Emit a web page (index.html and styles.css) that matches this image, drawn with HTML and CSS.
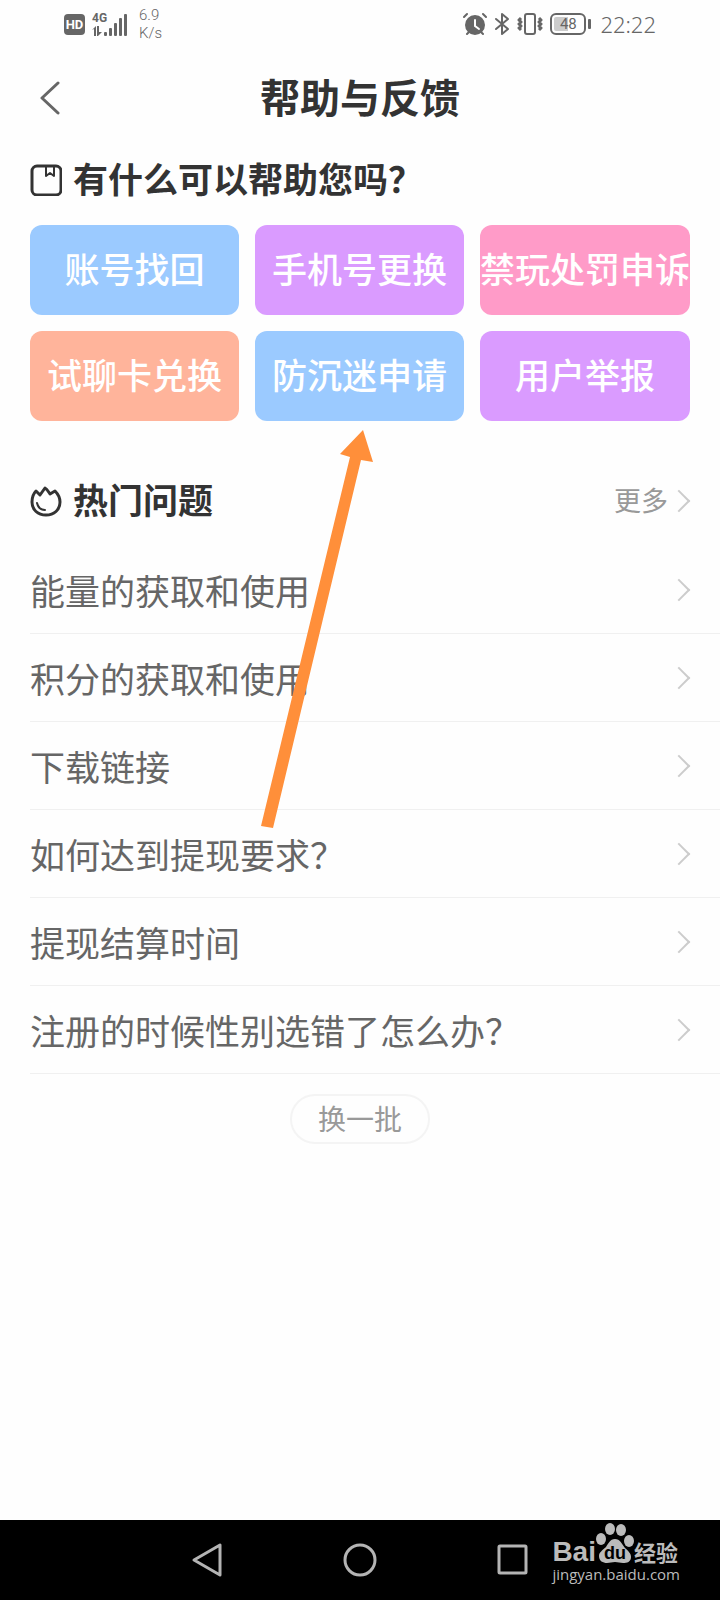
FILE: index.html
```html
<!DOCTYPE html>
<html lang="zh-CN">
<head>
<meta charset="UTF-8" />
<meta name="viewport" content="width=device-width, initial-scale=1" />
<title>帮助与反馈</title>
<link rel="stylesheet" href="styles.css">
</head>
<body>

<div class="status-bar">
  <div class="status-left">
    <span class="hd">HD</span>
    <span class="signal">
      <span class="net">4G</span>
      <svg width="36" height="24" viewBox="0 0 36 24" fill="#666">
        <path d="M0 18l4-4v10H2v-7zM5 14h2v6h3l-4 4H5z"/>
        <rect x="12" y="20" width="3" height="4" rx="1"/>
        <rect x="17" y="16" width="3" height="8" rx="1"/>
        <rect x="22" y="11" width="3" height="13" rx="1"/>
        <rect x="27" y="6" width="3" height="18" rx="1"/>
        <rect x="32" y="2" width="3" height="22" rx="1"/>
      </svg>
    </span>
    <span class="speed">6.9<br>K/s</span>
  </div>
  <div class="status-right">
    <svg width="24" height="24" viewBox="0 0 24 24" fill="none" stroke="#666" stroke-width="2" stroke-linecap="round">
      <circle cx="12" cy="13" r="9" fill="#666"/>
      <path d="M1 5l3-3M23 5l-3-3M6 20l-2 2M18 20l2 2"/>
      <path d="M12 8v6l4 3" stroke="#fff"/>
    </svg>
    <svg width="16" height="24" viewBox="0 0 16 24" fill="none" stroke="#666" stroke-width="2" stroke-linejoin="round" stroke-linecap="round">
      <path d="M2 7l12 10-6 5V2l6 5L2 17"/>
    </svg>
    <svg width="26" height="24" viewBox="0 0 26 24" fill="none" stroke="#666" stroke-width="2" stroke-linejoin="round">
      <rect x="8" y="2" width="10" height="20" rx="2"/>
      <path d="M4 6L2 8l2 2-2 2 2 2-2 2 2 2M22 6l2 2-2 2 2 2-2 2 2 2-2 2" stroke-width="3"/>
    </svg>
    <span class="battery"><span class="battery-body">48</span></span>
    <span class="clock">22:22</span>
  </div>
</div>

<header class="header">
  <button class="back" aria-label="返回">
    <svg width="20" height="34" viewBox="0 0 20 34" fill="none" stroke="#666" stroke-width="3" stroke-linecap="round" stroke-linejoin="round"><path d="M18 2L2 17l16 15"/></svg>
  </button>
  <h1>帮助与反馈</h1>
</header>

<main>
  <section class="help">
    <h2>
      <svg class="heading-icon" viewBox="0 0 32 32" fill="none" stroke="#333" stroke-width="3" stroke-linejoin="round">
        <rect x="2" y="2" width="29" height="29" rx="5"/>
        <path d="M16 2v10l4-3 4 3V2" stroke-width="2"/>
      </svg>
      有什么可以帮助您吗？
    </h2>
    <div class="tiles">
      <button class="tile blue">账号找回</button>
      <button class="tile purple">手机号更换</button>
      <button class="tile pink">禁玩处罚申诉</button>
      <button class="tile orange">试聊卡兑换</button>
      <button class="tile blue">防沉迷申请</button>
      <button class="tile purple">用户举报</button>
      <svg class="arrow" width="114" height="400" viewBox="0 0 114 400">
        <path d="M102 1L79 25l10 3L0 397l12 2L100 31l12 2z" fill="#ff8f3a"/>
      </svg>
    </div>
  </section>

  <section class="hot">
    <div class="hot-head">
      <h2>
        <svg class="heading-icon" viewBox="0 0 32 32" fill="none" stroke="#333" stroke-width="3" stroke-linejoin="round" stroke-linecap="round">
          <path d="M6 6l4 4 5-7c2 1 3 3 5 6l5-3c3 3 5 7 5 11 0 8-6 13-14 13S2 25 2 17c0-4 1-8 4-11z"/>
          <path d="M7 18c1 4 4 7 8 7" stroke-width="2"/>
        </svg>
        热门问题
      </h2>
      <a href="#" class="more">更多 <i class="chevron"></i></a>
    </div>
    <ul class="questions">
      <li><a href="#">能量的获取和使用 <i class="chevron"></i></a></li>
      <li><a href="#">积分的获取和使用 <i class="chevron"></i></a></li>
      <li><a href="#">下载链接 <i class="chevron"></i></a></li>
      <li><a href="#">如何达到提现要求？ <i class="chevron"></i></a></li>
      <li><a href="#">提现结算时间 <i class="chevron"></i></a></li>
      <li><a href="#">注册的时候性别选错了怎么办？ <i class="chevron"></i></a></li>
    </ul>
  </section>
  <button class="refresh">换一批</button>
</main>

<nav class="nav-bar">
  <button aria-label="返回">
    <svg width="36" height="36" viewBox="0 0 36 36" fill="none" stroke="#b4b4b4" stroke-width="3" stroke-linejoin="round"><path d="M31 3v30L5 18z"/></svg>
  </button>
  <button aria-label="主页">
    <svg width="36" height="36" viewBox="0 0 36 36" fill="none" stroke="#b4b4b4" stroke-width="3"><circle cx="18" cy="18" r="15"/></svg>
  </button>
  <button aria-label="最近任务">
    <svg width="36" height="36" viewBox="0 0 36 36" fill="none" stroke="#b4b4b4" stroke-width="3" stroke-linejoin="round"><rect x="4" y="4" width="27" height="27" rx="1"/></svg>
  </button>
  <div class="watermark">
    <div class="brand">
      <span class="bai">Bai</span>
      <svg width="38" height="42" viewBox="0 0 38 42" fill="#bbb">
        <ellipse cx="5" cy="17" rx="5" ry="6"/>
        <ellipse cx="14" cy="7" rx="5" ry="6"/>
        <ellipse cx="25" cy="8" rx="5" ry="6"/>
        <ellipse cx="33" cy="19" rx="5" ry="6"/>
        <path d="M19 17c5 0 7 5 10 9 3 3 6 5 6 9 0 5-4 6-8 6-3 0-5-1-8-1s-5 1-8 1c-4 0-8-2-8-7 0-4 4-6 7-9 2-3 4-8 9-8z"/>
        <text x="19" y="37" class="du">du</text>
      </svg>
      <span class="jingyan">经验</span>
    </div>
    <div class="site">jingyan.baidu.com</div>
  </div>
</nav>

</body>
</html>
```

FILE: styles.css
```css
* {
  box-sizing: border-box;
}
body {
  margin: 0;
  min-height: 100vh;
  display: flex;
  flex-direction: column;
  font-family: "Noto Sans", "Noto Sans CJK SC", sans-serif;
  font-size: 35px;
  color: #666;
  background: #fefefe;
}
h1, h2, ul {
  margin: 0;
  padding: 0;
}
a {
  color: inherit;
  text-decoration: none;
}
button {
  border: none;
  padding: 0;
  background: none;
  font-family: inherit;
  font-size: inherit;
  cursor: pointer;
}
svg {
  display: block;
  flex: none;
}

/* status bar */
.status-bar {
  display: flex;
  justify-content: space-between;
  align-items: center;
  height: 48px;
  padding: 0 64px;
}
.status-left, .status-right {
  display: flex;
  align-items: center;
  gap: 7px;
}
.hd {
  width: 21px;
  height: 21px;
  border-radius: 4px;
  background: #666;
  color: #fff;
  font: bold 13px/21px Roboto, sans-serif;
  text-align: center;
}
.signal {
  position: relative;
}
.net {
  position: absolute;
  left: 0;
  top: 0;
  font: bold 12px/12px Roboto, sans-serif;
}
.speed {
  margin-left: 4px;
  font: 300 15px/18px Roboto, sans-serif;
}
.battery {
  display: flex;
  align-items: center;
}
.battery-body {
  width: 36px;
  height: 22px;
  border: 2px solid #666;
  border-radius: 6px;
  background: linear-gradient(to right, #ccc 50%, #fefefe 50%);
  background-clip: content-box;
  padding: 2px;
  font: 15px/14px Roboto, sans-serif;
  text-align: center;
}
.battery::after {
  content: "";
  width: 3px;
  height: 10px;
  margin-left: 2px;
  border-radius: 1px;
  background: #666;
}
.clock {
  margin-left: 2px;
  font-size: 22px;
  font-weight: 300;
  line-height: 24px;
}

/* title */
.header {
  position: relative;
  display: flex;
  align-items: center;
  justify-content: center;
  height: 100px;
}
.back {
  position: absolute;
  left: 40px;
}
h1 {
  font-size: 40px;
  line-height: 60px;
  color: #333;
}
h2 {
  display: flex;
  align-items: center;
  gap: 11px;
  font-size: 35px;
  line-height: 48px;
  color: #333;
}
.heading-icon {
  width: 32px;
  height: 32px;
}

/* help tiles */
.help {
  padding: 8px 30px 0;
}
.tiles {
  position: relative;
  display: grid;
  grid-template-columns: repeat(3, 1fr);
  gap: 16px;
  margin-top: 21px;
}
.tile {
  height: 90px;
  border-radius: 12px;
  color: #fff;
  font-weight: 500;
  line-height: 48px;
  white-space: nowrap;
}
.blue {
  background: #9bcaff;
}
.purple {
  background: #da9bff;
}
.pink {
  background: #ff9bc8;
}
.orange {
  background: #ffb49b;
}
.arrow {
  position: absolute;
  left: 35%;
  top: 100%;
  margin-top: 8px;
  pointer-events: none;
}

/* hot questions */
.hot {
  padding-left: 30px;
  margin-top: 56px;
}
.hot-head {
  display: flex;
  justify-content: space-between;
  align-items: center;
  padding-right: 30px;
  margin-bottom: 21px;
}
.more {
  display: flex;
  align-items: center;
  gap: 3px;
  font-size: 27px;
  line-height: 36px;
  color: #999;
}
.chevron {
  width: 16px;
  height: 16px;
  margin-right: 3px;
  border-top: 2px solid #ccc;
  border-right: 2px solid #ccc;
  transform: rotate(45deg);
}
.questions {
  list-style: none;
}
.questions a {
  display: flex;
  justify-content: space-between;
  align-items: center;
  height: 88px;
  padding-right: 30px;
  border-bottom: 1px solid #f0f0f0;
}
.refresh {
  display: block;
  width: 140px;
  height: 50px;
  margin: 20px auto;
  border: 2px solid #f4f4f4;
  border-radius: 25px;
  font-size: 28px;
  line-height: 40px;
  color: #999;
}

/* bottom navigation */
.nav-bar {
  position: relative;
  display: flex;
  justify-content: center;
  align-items: center;
  gap: 117px;
  height: 80px;
  margin-top: auto;
  background: #000;
}
.watermark {
  position: absolute;
  right: 40px;
  top: 2px;
  color: #bbb;
}
.brand {
  display: flex;
  align-items: flex-end;
  height: 42px;
}
.bai {
  font: bold 28px/24px "Liberation Sans", sans-serif;
}
.jingyan {
  font-size: 22px;
  font-weight: bold;
  line-height: 24px;
}
.du {
  font: bold 18px "Liberation Sans", sans-serif;
  text-anchor: middle;
  fill: #000;
}
.site {
  font: 15px/20px "Open Sans", sans-serif;
}
```
